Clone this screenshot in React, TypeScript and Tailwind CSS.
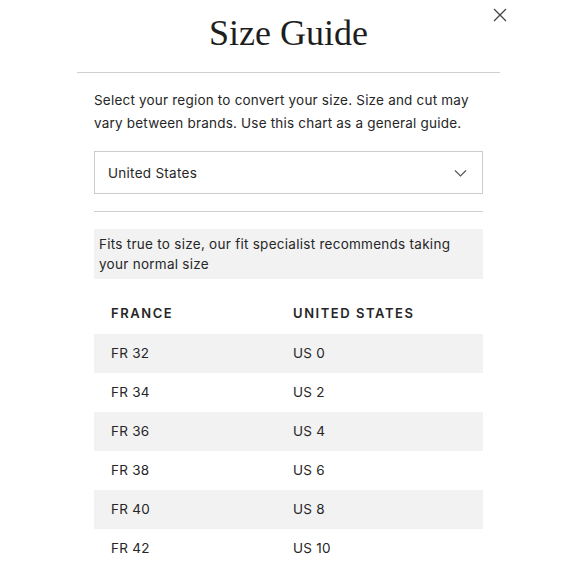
import { useState } from "react";

const rows = [
  ["FR 32", "US 0"],
  ["FR 34", "US 2"],
  ["FR 36", "US 4"],
  ["FR 38", "US 6"],
  ["FR 40", "US 8"],
  ["FR 42", "US 10"],
];

export default function App() {
  const [region] = useState("United States");

  return (
    <div className="relative h-[580px] w-[580px] overflow-hidden bg-white text-[#262626] font-['Inter',sans-serif]">
      <button className="absolute right-[69px] top-[4px] p-1 text-[#444]">
        <CloseIcon />
      </button>

      <div className="ml-[77px] w-[423px]">
        <div className="border-b border-[#cfcfcf] pb-[17px] pt-[11px] text-center">
          <h1 className="font-['Liberation_Serif',serif] text-[36px] leading-[44px] text-[#1e1e1e]">
            Size Guide
          </h1>
        </div>

        <div className="px-[17px] pt-[16px]">
          <p className="text-[13.5px] leading-[23px] tracking-[0.015em]">
            Select your region to convert your size. Size and cut may vary between brands. Use this chart as a general guide.
          </p>

          <div className="mt-[16px] flex h-[43px] items-center justify-between border border-[#cccccc] pl-[13px] pr-[15px] pt-[1px]">
            <span className="text-[13.5px] tracking-[0.02em]">{region}</span>
            <ChevronIcon />
          </div>

          <div className="mt-[17px] border-t border-[#d0d0d0]" />

          <div className="mt-[17px] bg-[#f2f2f3] py-[5px] pl-[5px] pr-[30px] text-[13.5px] leading-[20px] tracking-[0.02em]">
            Fits true to size, our fit specialist recommends taking your normal size
          </div>

          <div className="mt-[25px] grid grid-cols-[182px_1fr] px-[17px] pb-[10px] text-[13px] font-semibold tracking-[0.12em]">
            <span>FRANCE</span>
            <span>UNITED STATES</span>
          </div>

          <div>
            {rows.map(([fr, us], i) => (
              <div
                key={fr}
                className={`grid h-[39px] grid-cols-[182px_1fr] items-center px-[17px] text-[13.5px] tracking-[0.02em] ${
                  i % 2 === 0 ? "bg-[#f2f2f3]" : "bg-white"
                }`}
              >
                <span>{fr}</span>
                <span>{us}</span>
              </div>
            ))}
          </div>
        </div>
      </div>
    </div>
  );
}

const CloseIcon = () => (
  <svg className="h-[14px] w-[14px]" viewBox="0 0 14 14" fill="none" stroke="currentColor" strokeWidth="1.3">
    <path d="M1 1l12 12M13 1L1 13" />
  </svg>
);

const ChevronIcon = () => (
  <svg className="h-[8px] w-[13px] text-[#555]" viewBox="0 0 13 8" fill="none" stroke="currentColor" strokeWidth="1.2">
    <path d="M1 1.5l5.5 5.5L12 1.5" />
  </svg>
);
